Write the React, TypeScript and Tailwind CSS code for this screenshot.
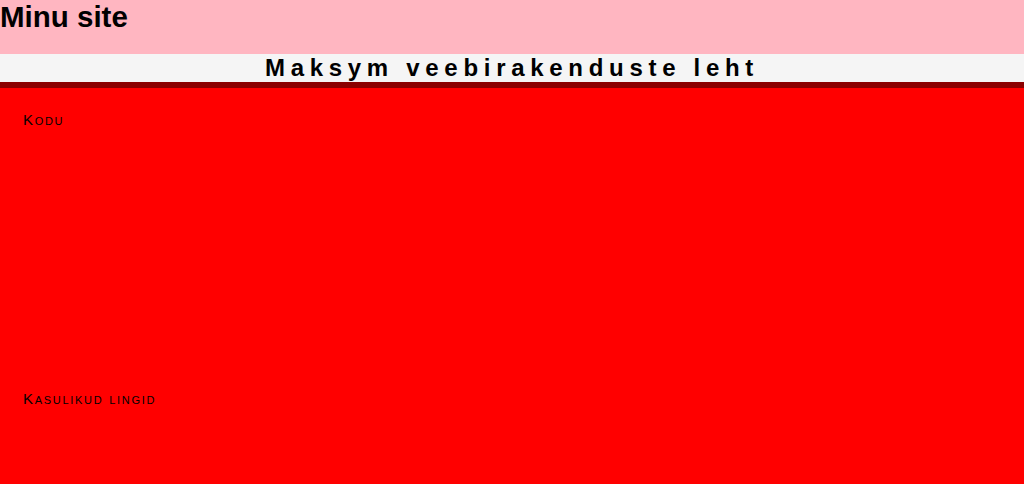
export default function App() {
  return (
    <div className="min-h-[484px] bg-[#ff0000] font-['Liberation_Sans',Arial,sans-serif] text-black">
      <header className="h-[54px] bg-[#ffb6c1]">
        <h1 className="m-0 text-[29.5px] font-bold leading-[34px]">Minu site</h1>
      </header>
      <div className="h-[28px] border-b-[6px] border-[#8b0000] bg-[#f5f5f5] box-content">
        <h2 className="text-center text-[24px] font-bold leading-[28px] tracking-[5.7px]">
          Maksym veebirakenduste leht
        </h2>
      </div>
      <nav className="px-[23px] pt-[22px]">
        <div className="text-[15px] [font-variant:small-caps] leading-[20px] tracking-[1.7px]">Kodu</div>
        <div className="mt-[259px] text-[15px] [font-variant:small-caps] leading-[20px] tracking-[1.7px]">
          Kasulikud lingid
        </div>
      </nav>
    </div>
  );
}
